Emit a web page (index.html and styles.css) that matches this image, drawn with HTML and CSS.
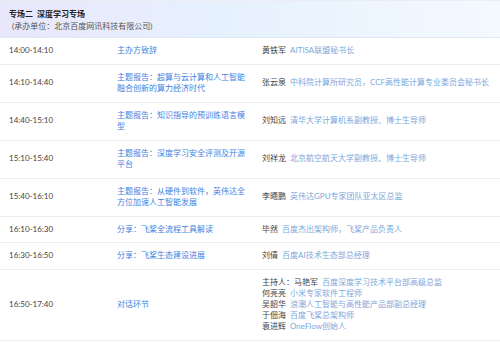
FILE: index.html
```html
<!DOCTYPE html>
<html lang="zh-CN">

<head>
    <meta charset="UTF-8">
    <meta name="viewport" content="width=device-width, initial-scale=1.0">
    <link rel="stylesheet" href="styles.css">
    <title>专场二 深度学习专场</title>
</head>

<body>

    <section class="session-head">
        <h2>专场二&nbsp; 深度学习专场</h2>
        <p>(承办单位：北京百度网讯科技有限公司)</p>
    </section>

    <section class="agenda">

        <div class="row">
            <div class="time">14:00-14:10</div>
            <div class="topic">主办方致辞</div>
            <div class="speakers">
                <p><span class="name">黄铁军</span><span class="role">AITISA联盟秘书长</span></p>
            </div>
        </div>

        <div class="row">
            <div class="time">14:10-14:40</div>
            <div class="topic">主题报告：超算与云计算和人工智能融合创新的算力经济时代</div>
            <div class="speakers">
                <p><span class="name">张云泉</span><span class="role">中科院计算所研究员，CCF高性能计算专业委员会秘书长</span></p>
            </div>
        </div>

        <div class="row">
            <div class="time">14:40-15:10</div>
            <div class="topic">主题报告：知识指导的预训练语言模型</div>
            <div class="speakers">
                <p><span class="name">刘知远</span><span class="role">清华大学计算机系副教授、博士生导师</span></p>
            </div>
        </div>

        <div class="row">
            <div class="time">15:10-15:40</div>
            <div class="topic">主题报告：深度学习安全评测及开源平台</div>
            <div class="speakers">
                <p><span class="name">刘祥龙</span><span class="role">北京航空航天大学副教授、博士生导师</span></p>
            </div>
        </div>

        <div class="row">
            <div class="time">15:40-16:10</div>
            <div class="topic">主题报告：从硬件到软件，英伟达全方位加速人工智能发展</div>
            <div class="speakers">
                <p><span class="name">李曦鹏</span><span class="role">英伟达GPU专家团队亚太区总监</span></p>
            </div>
        </div>

        <div class="row">
            <div class="time">16:10-16:30</div>
            <div class="topic">分享：飞桨全流程工具解读</div>
            <div class="speakers">
                <p><span class="name">毕然</span><span class="role">百度杰出架构师，飞桨产品负责人</span></p>
            </div>
        </div>

        <div class="row">
            <div class="time">16:30-16:50</div>
            <div class="topic">分享：飞桨生态建设进展</div>
            <div class="speakers">
                <p><span class="name">刘倩</span><span class="role">百度AI技术生态部总经理</span></p>
            </div>
        </div>

        <div class="row row-panel">
            <div class="time">16:50-17:40</div>
            <div class="topic">对话环节</div>
            <div class="speakers">
                <p><span class="name">主持人：马艳军</span><span class="role">百度深度学习技术平台部高级总监</span></p>
                <p><span class="name">何亮亮</span><span class="role">小米专家软件工程师</span></p>
                <p><span class="name">吴韶华</span><span class="role">浪潮人工智能与高性能产品部副总经理</span></p>
                <p><span class="name">于佃海</span><span class="role">百度飞桨总架构师</span></p>
                <p><span class="name">袁进辉</span><span class="role">OneFlow创始人</span></p>
            </div>
        </div>

    </section>

</body>

</html>
```

FILE: styles.css
```css
* {
    box-sizing: border-box;
}

body {
    margin: 0;
    background-color: #fff;
    font-family: Lato, "Noto Sans CJK SC", sans-serif;
    font-size: 8px;
    line-height: 11.5px;
    color: #444;
}

p {
    margin: 0;
}

.session-head {
    height: 38px;
    padding: 8px 9px 0 9px;
    border-top: 1px solid #ececf2;
    border-bottom: 1px solid #dfe8f5;
    background: linear-gradient(90deg, #e9e7fb 0%, #e6f1fe 45%, #f4f9ff 100%);
}

.session-head h2 {
    margin: 0;
    font-size: 8px;
    font-weight: bold;
    color: #222;
}

.session-head p {
    padding-left: 3px;
    color: #555;
}

.row {
    display: flex;
    align-items: center;
    padding: 7px 0 7px 9px;
    border-bottom: 1px solid #ededed;
}

.time {
    width: 108px;
    flex-shrink: 0;
    color: #444;
}

.topic {
    width: 132px;
    flex-shrink: 0;
    color: #3f82e2;
}

.speakers {
    padding-left: 13px;
}

.name {
    margin-right: 4px;
    color: #444;
}

.role {
    color: #7da7dc;
}

.row-panel {
    padding-top: 7.5px;
    padding-bottom: 7.5px;
}

.row-panel .speakers {
    line-height: 11px;
}
```
